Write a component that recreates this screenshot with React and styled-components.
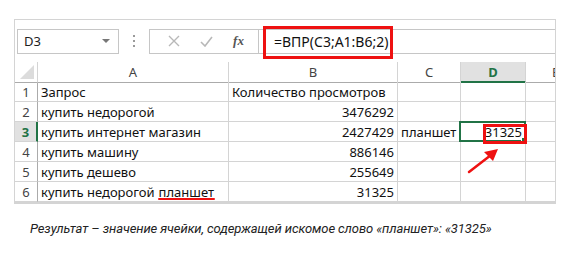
import React from "react";
import styled, { createGlobalStyle } from "styled-components";

const Global = createGlobalStyle`
  body {
    margin: 0;
    background: #ffffff;
    font-family: "Noto Sans", "Open Sans", sans-serif;
  }
`;

const Page = styled.div`
  width: 572px;
  height: 255px;
  padding: 19px 0 0 14px;
  box-sizing: border-box;
  position: relative;
`;

const Frame = styled.div`
  width: 542px;
  border: 1px solid #d4d4d4;
  border-bottom: 2px solid #d4d4d4;
  box-sizing: border-box;
  overflow: hidden;
  position: relative;
`;

const FormulaBar = styled.div`
  display: flex;
  align-items: center;
  height: 42px;
  padding-left: 2px;
`;

const NameBox = styled.div`
  width: 102px;
  height: 25px;
  border: 1px solid #c6c6c6;
  box-sizing: border-box;
  display: flex;
  align-items: center;
  justify-content: space-between;
  padding: 0 8px 0 6px;
  font-size: 13px;
  color: #222;
`;

const Caret = styled.span`
  width: 0;
  height: 0;
  border-left: 4px solid transparent;
  border-right: 4px solid transparent;
  border-top: 4px solid #777;
`;

const Dots = styled.div`
  width: 30px;
  display: flex;
  flex-direction: column;
  align-items: center;
  gap: 3px;
  span {
    width: 2px;
    height: 2px;
    background: #9a9a9a;
  }
`;

const ButtonGroup = styled.div`
  width: 109px;
  height: 25px;
  border: 1px solid #c6c6c6;
  border-right: none;
  box-sizing: border-box;
  display: flex;
  align-items: center;
  justify-content: space-around;
  padding: 0 4px 0 8px;
  color: #b4b4b4;
`;

const Fx = styled.span`
  font-family: "Liberation Serif", serif;
  font-style: italic;
  font-weight: 700;
  font-size: 13px;
  color: #555;
`;

const FormulaInput = styled.div`
  flex: 1;
  height: 25px;
  border: 1px solid #c6c6c6;
  border-right: none;
  box-sizing: border-box;
  display: flex;
  align-items: center;
  padding-left: 15px;
  font-size: 14px;
  color: #111;
`;

const RedBox = styled.div`
  position: absolute;
  left: ${(p) => p.$x}px;
  top: ${(p) => p.$y}px;
  width: ${(p) => p.$w}px;
  height: ${(p) => p.$h}px;
  border: ${(p) => p.$b}px solid #ee1111;
  box-sizing: border-box;
`;

const Grid = styled.div`
  display: grid;
  grid-template-columns: 23px 191px 169px 63px 65px 60px;
  grid-auto-rows: 20px;
`;

const HeadCell = styled.div`
  height: 21px;
  box-sizing: border-box;
  border-right: 1px solid #d4d4d4;
  border-bottom: ${(p) => (p.$active ? "2px solid #217346" : "1px solid #ababab")};
  background: ${(p) => (p.$active ? "#e1e1e1" : "#ffffff")};
  color: ${(p) => (p.$active ? "#217346" : "#444")};
  font-weight: ${(p) => (p.$active ? 700 : 400)};
  font-size: 13px;
  display: flex;
  align-items: center;
  justify-content: center;
  position: relative;
`;

const Corner = styled.div`
  position: absolute;
  right: 3px;
  bottom: 3px;
  width: 0;
  height: 0;
  border-left: 14px solid transparent;
  border-bottom: 14px solid #dcdcdc;
`;

const RowNum = styled.div`
  border-right: ${(p) => (p.$active ? "2px solid #217346" : "1px solid #ababab")};
  border-bottom: 1px solid #d4d4d4;
  background: ${(p) => (p.$active ? "#e1e1e1" : "#ffffff")};
  color: ${(p) => (p.$active ? "#217346" : "#444")};
  font-weight: ${(p) => (p.$active ? 700 : 400)};
  font-size: 13px;
  display: flex;
  align-items: center;
  justify-content: center;
  box-sizing: border-box;
`;

const Cell = styled.div`
  border-right: 1px solid #d4d4d4;
  border-bottom: 1px solid #d4d4d4;
  box-sizing: border-box;
  font-size: 13px;
  color: #111;
  display: flex;
  align-items: center;
  justify-content: ${(p) => (p.$num ? "flex-end" : "flex-start")};
  padding: 0 3px;
  white-space: nowrap;
  position: relative;
`;

const Selected = styled.div`
  position: absolute;
  inset: -1px -1px -1px -2px;
  border: 2px solid #217346;
  &::after {
    content: "";
    position: absolute;
    right: -4px;
    bottom: -4px;
    width: 5px;
    height: 5px;
    background: #217346;
    border: 1px solid #fff;
  }
`;

const Underlined = styled.span`
  position: relative;
  margin-left: 4px;
  &::after {
    content: "";
    position: absolute;
    left: -1px;
    right: -1px;
    bottom: 1px;
    height: 2px;
    border-radius: 1px;
    background: #ee1111;
  }
`;

const Caption = styled.p`
  margin: 17px 0 0 16px;
  font-family: Roboto, "Noto Sans", sans-serif;
  font-style: italic;
  font-size: 13px;
  letter-spacing: -0.1px;
  color: #222;
`;

const rows = [
  ["Запрос", "Количество просмотров", "", ""],
  ["купить недорогой", "3476292", "", ""],
  ["купить интернет магазин", "2427429", "планшет", "31325"],
  ["купить машину", "886146", "", ""],
  ["купить дешево", "255649", "", ""],
  ["купить недорогой", "31325", "", ""],
];

function XIcon() {
  return (
    <svg width="12" height="12" viewBox="0 0 12 12">
      <path d="M1 1L11 11M11 1L1 11" stroke="#b8b8b8" strokeWidth="1.4" />
    </svg>
  );
}

function CheckIcon() {
  return (
    <svg width="13" height="11" viewBox="0 0 13 11">
      <path d="M1 6L5 10L12 1" stroke="#b8b8b8" strokeWidth="1.6" fill="none" />
    </svg>
  );
}

function Arrow() {
  return (
    <svg
      width="40"
      height="34"
      viewBox="0 0 40 34"
      style={{ position: "absolute", left: 464, top: 144 }}
    >
      <path d="M5 28L27 11" stroke="#ee1111" strokeWidth="2.5" strokeLinecap="round" />
      <path d="M34 5L20 8L29 17Z" fill="#ee1111" />
    </svg>
  );
}

export default function App() {
  return (
    <Page>
      <Global />
      <Frame>
        <FormulaBar>
          <NameBox>
            D3
            <Caret />
          </NameBox>
          <Dots>
            <span />
            <span />
            <span />
          </Dots>
          <ButtonGroup>
            <XIcon />
            <CheckIcon />
            <Fx>fx</Fx>
          </ButtonGroup>
          <FormulaInput>=ВПР(C3;A1:B6;2)</FormulaInput>
        </FormulaBar>
        <Grid>
          <HeadCell>
            <Corner />
          </HeadCell>
          <HeadCell>A</HeadCell>
          <HeadCell>B</HeadCell>
          <HeadCell>C</HeadCell>
          <HeadCell $active>D</HeadCell>
          <HeadCell>E</HeadCell>
          {rows.map((r, i) => (
            <React.Fragment key={i}>
              <RowNum $active={i === 2}>{i + 1}</RowNum>
              <Cell>
                {r[0]}
                {i === 5 && <Underlined>планшет</Underlined>}
              </Cell>
              <Cell $num={i > 0}>{r[1]}</Cell>
              <Cell>{r[2]}</Cell>
              <Cell $num>
                {r[3]}
                {i === 2 && <Selected />}
              </Cell>
              <Cell />
            </React.Fragment>
          ))}
        </Grid>
      </Frame>
      <RedBox $x={263} $y={26} $w={130} $h={33} $b={3} />
      <RedBox $x={483} $y={124} $w={44} $h={20} $b={3} />
      <Arrow />
      <Caption>Результат – значение ячейки, содержащей искомое слово «планшет»: «31325»</Caption>
    </Page>
  );
}
